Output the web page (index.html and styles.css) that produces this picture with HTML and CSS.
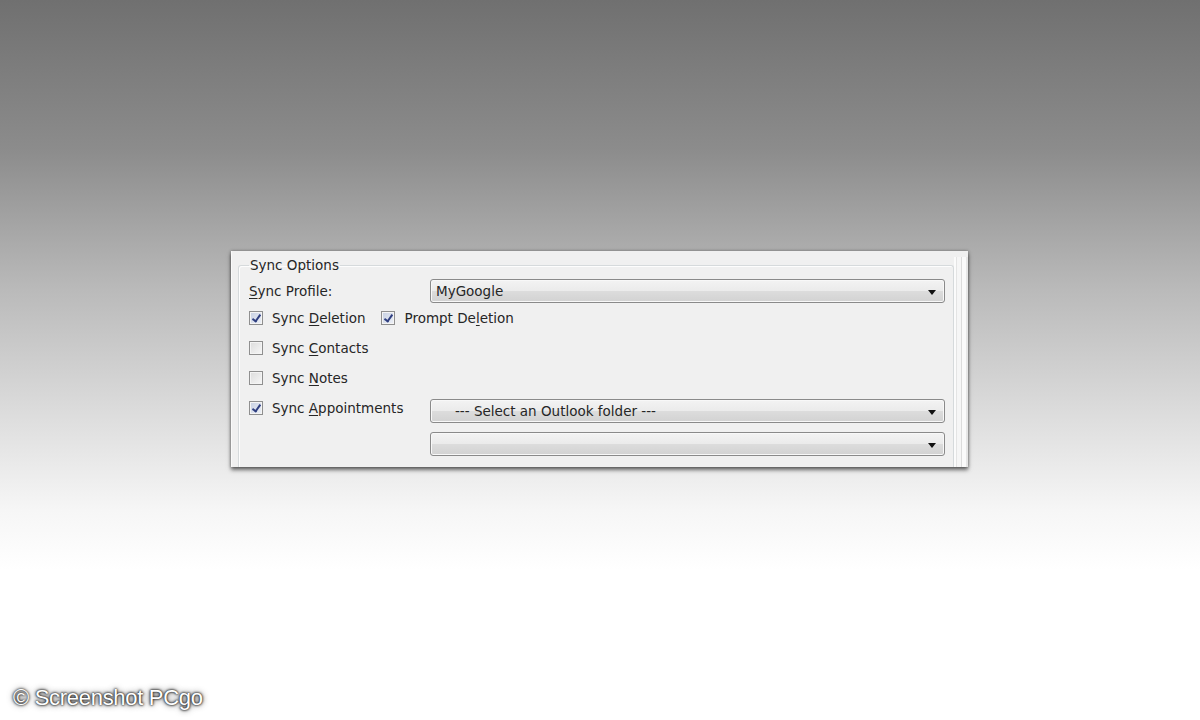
FILE: index.html
```html
<!DOCTYPE html>
<html lang="en">
<head>
    <meta charset="UTF-8">
    <title>Sync Options</title>
    <link rel="stylesheet" href="styles.css">
</head>
<body>
    <div id="stage">
        <div class="panel">
            <fieldset class="group">
                <legend>Sync Options</legend>

                <div class="row row-profile">
                    <span class="label"><u>S</u>ync Profile:</span>
                    <div class="combo"><span>MyGoogle</span><i class="arrow"></i></div>
                </div>

                <div class="row row-check">
                    <label class="check on"><b class="box"></b><span>Sync <u>D</u>eletion</span></label>
                    <label class="check on"><b class="box"></b><span>Prompt De<u>l</u>etion</span></label>
                </div>

                <div class="row row-check spaced">
                    <label class="check"><b class="box"></b><span>Sync <u>C</u>ontacts</span></label>
                </div>

                <div class="row row-check spaced">
                    <label class="check"><b class="box"></b><span>Sync <u>N</u>otes</span></label>
                </div>

                <div class="row row-appt">
                    <label class="check on label"><b class="box"></b><span>Sync <u>A</u>ppointments</span></label>
                    <div class="combo center"><span>--- Select an Outlook folder ---</span><i class="arrow"></i></div>
                </div>

                <div class="row row-last">
                    <span class="label"></span>
                    <div class="combo"><span></span><i class="arrow"></i></div>
                </div>
            </fieldset>
            <div class="edge"></div>
        </div>
    </div>

    <div class="credit">&copy; Screenshot PCgo</div>
</body>
</html>
```

FILE: styles.css
```css
html, body {
    height: 100%;
}

body {
    margin: 0;
    font-family: "DejaVu Sans", Verdana, sans-serif;
    font-size: 13.5px;
    color: #262626;
    background: linear-gradient(to bottom, #707070 0px, #8c8c8c 150px, #bababa 290px, #dedede 420px, #f6f6f6 510px, #ffffff 570px);
    overflow: hidden;
}

#stage {
    padding: 251px 0 0 231px;
}

.panel {
    width: 736px;
    height: 216px;
    display: flex;
    background-color: #f0f0f0;
    border-left: 1px solid #fafafa;
    box-shadow: 0 3px 4px rgba(0, 0, 0, 0.55), 0 0 3px rgba(0, 0, 0, 0.35);
    overflow: hidden;
}

.group {
    flex: 1;
    margin: 6px 0 0 6px;
    padding: 0 8px 0 10px;
    border: 1px solid #d6dadc;
    border-bottom: none;
    border-radius: 3px 3px 0 0;
    box-shadow: inset 1px 1px 0 #fdfdfd;
}

.group legend {
    padding: 0 1px;
    line-height: 16px;
}

/* strip of light lines along the right side */
.edge {
    width: 14px;
    margin-top: 6px;
    background: linear-gradient(to right, #fbfbfb 0 2px, #e4e4e4 2px 3px, #f6f6f6 3px 7px, #dcdcdc 7px 8px, #fafafa 8px 12px, #e6e6e6 12px 14px);
}

.row {
    display: flex;
    align-items: center;
}

.row-profile {
    margin-top: 6px;
    height: 24px;
}

.row-check {
    margin-top: 3px;
    height: 24px;
}

.row-check.spaced {
    margin-top: 6px;
}

.row-appt {
    margin-top: 9px;
    height: 24px;
    align-items: flex-start;
}

.row-appt .label {
    padding-top: 1px;
    margin-right: 0;
}

.row-last {
    margin-top: 9px;
    height: 24px;
}

.label {
    width: 181px;
    flex: none;
    line-height: 16px;
}

u {
    text-decoration-thickness: 1px;
    text-underline-offset: 2px;
}

.check {
    display: inline-flex;
    align-items: center;
    line-height: 16px;
    margin-right: 16px;
    white-space: nowrap;
}

.check .box {
    width: 12px;
    height: 12px;
    margin-right: 9px;
    border: 1px solid #8f8f8f;
    background: linear-gradient(135deg, #dcdcdc, #f7f7f7);
    box-shadow: inset 0 0 0 1px #f4f4f4;
    position: relative;
}

.check.on .box {
    background: linear-gradient(135deg, #c6cfe2, #eef1f7);
}

.check.on .box::after {
    content: "";
    position: absolute;
    left: 4px;
    top: 1px;
    width: 3px;
    height: 7px;
    border: solid #2f3f80;
    border-width: 0 2px 2px 0;
    transform: rotate(35deg);
}

.combo {
    flex: 1;
    height: 22px;
    display: flex;
    align-items: center;
    padding: 0 8px 0 5px;
    border: 1px solid #8a8a8a;
    border-radius: 3px;
    background: linear-gradient(to bottom, #f3f3f3 0%, #ebebeb 48%, #dcdcdc 52%, #d2d2d2 100%);
    box-shadow: inset 0 0 0 1px #f8f8f8;
}

.combo span {
    flex: 1;
    white-space: nowrap;
}

.combo.center span {
    padding-left: 19px;
}

.arrow {
    width: 0;
    height: 0;
    border-left: 4px solid transparent;
    border-right: 4px solid transparent;
    border-top: 5px solid #111;
    margin-top: 2px;
}

.credit {
    position: absolute;
    left: 13px;
    bottom: 9px;
    font-family: "Liberation Sans", Arial, sans-serif;
    font-size: 22px;
    letter-spacing: -0.3px;
    color: #ffffff;
    text-shadow: 0 0 2px #111, 0 0 3px #222, 0 0 6px #444;
}
```
